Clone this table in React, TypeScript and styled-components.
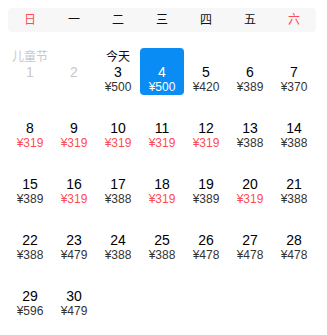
import styled, { createGlobalStyle } from "styled-components";

const GlobalStyle = createGlobalStyle`
  body {
    margin: 0;
    background: #fff;
    font-family: "Liberation Sans", "Noto Sans CJK SC", sans-serif;
  }
`;

interface Day {
  day: number;
  price?: string;
  cheap?: boolean;
  label?: string;
  past?: boolean;
  selected?: boolean;
}

const weekDays = ["日", "一", "二", "三", "四", "五", "六"];

const prices: Record<number, string> = {
  3: "500", 4: "500", 5: "420", 6: "389", 7: "370",
  8: "319", 9: "319", 10: "319", 11: "319", 12: "319", 13: "388", 14: "388",
  15: "389", 16: "319", 17: "388", 18: "319", 19: "389", 20: "319", 21: "388",
  22: "388", 23: "479", 24: "388", 25: "388", 26: "478", 27: "478", 28: "478",
  29: "596", 30: "479",
};

const days: Day[] = Array.from({ length: 30 }, (_, i) => {
  const d = i + 1;
  return {
    day: d,
    price: prices[d],
    cheap: prices[d] === "319",
    label: d === 1 ? "儿童节" : d === 3 ? "今天" : undefined,
    past: d < 3,
    selected: d === 4,
  };
});

const App = () => {
  return (
    <Page>
      <GlobalStyle />
      <WeekBar>
        {weekDays.map((w, i) => (
          <WeekDay key={w} $weekend={i === 0 || i === 6}>
            {w}
          </WeekDay>
        ))}
      </WeekBar>
      <Grid>
        {days.map((d) => (
          <Cell key={d.day} $selected={d.selected}>
            <Label $past={d.past}>{d.label}</Label>
            <DayNum $past={d.past} $selected={d.selected}>
              {d.day}
            </DayNum>
            {d.price && (
              <Price $cheap={d.cheap} $selected={d.selected}>
                ¥{d.price}
              </Price>
            )}
          </Cell>
        ))}
      </Grid>
    </Page>
  );
};

export default App;

const Page = styled.div`
  width: 308px;
  padding: 8px;
`;

const WeekBar = styled.div`
  display: grid;
  grid-template-columns: repeat(7, 1fr);
  height: 24px;
  background: #f7f7f7;
  border-radius: 4px;
  align-items: center;
`;

const WeekDay = styled.span<{ $weekend?: boolean }>`
  text-align: center;
  font-size: 12px;
  line-height: 24px;
  color: ${(p) => (p.$weekend ? "#ff4b55" : "#111")};
`;

const Grid = styled.div`
  display: grid;
  grid-template-columns: repeat(7, 44px);
  grid-auto-rows: 56px;
  margin-top: 16px;
`;

const Cell = styled.div<{ $selected?: boolean }>`
  height: 47px;
  display: flex;
  flex-direction: column;
  align-items: center;
  padding-top: 2px;
  box-sizing: border-box;
  border-radius: 4px;
  background: ${(p) => (p.$selected ? "#0a8cf5" : "transparent")};
`;

const Label = styled.span<{ $past?: boolean }>`
  font-size: 12px;
  line-height: 14px;
  height: 14px;
  color: ${(p) => (p.$past ? "#c8c8c8" : "#111")};
`;

const DayNum = styled.span<{ $past?: boolean; $selected?: boolean }>`
  font-size: 14px;
  line-height: 16px;
  color: ${(p) => (p.$selected ? "#fff" : p.$past ? "#c8c8c8" : "#000")};
`;

const Price = styled.span<{ $cheap?: boolean; $selected?: boolean }>`
  font-size: 12px;
  line-height: 14px;
  color: ${(p) => (p.$selected ? "#fff" : p.$cheap ? "#ff4b55" : "#333")};
`;
